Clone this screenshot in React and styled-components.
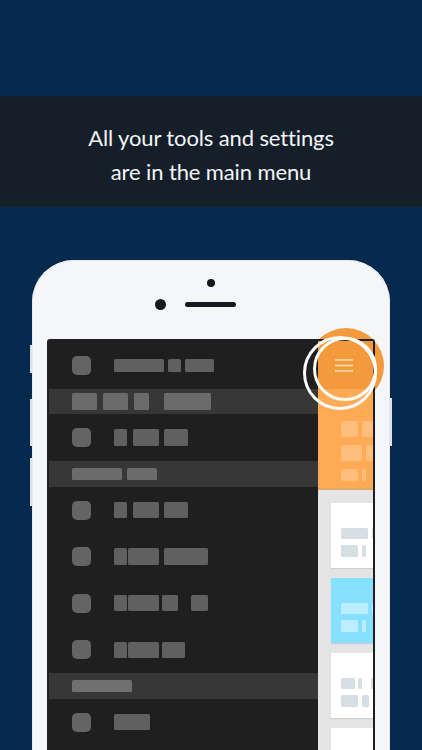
import React from "react";
import styled, { createGlobalStyle } from "styled-components";

const Global = createGlobalStyle`
  html, body { margin: 0; padding: 0; height: 750px; overflow: hidden; background: #052a4e; }
  #root { height: 750px; overflow: hidden; }
`;

const Page = styled.div`
  height: 750px;
  overflow: hidden;
  background: #052a4e;
  display: flex;
  flex-direction: column;
  padding-top: 96px;
  box-sizing: border-box;
`;

const Banner = styled.header`
  height: 111px;
  flex-shrink: 0;
  box-sizing: border-box;
  padding-top: 6px;
  background: #151f2a;
  display: flex;
  flex-direction: column;
  align-items: center;
  justify-content: center;
  color: #f4f5f6;
  font-family: Lato, "Open Sans", sans-serif;
  font-size: 22px;
  line-height: 34px;
  letter-spacing: -0.12px;
`;

const Phone = styled.div`
  position: relative;
  flex-shrink: 0;
  width: 358px;
  height: 600px;
  margin: 53px 0 0 32px;
  background: #f5f6f8;
  border-radius: 42px 42px 0 0;
  box-shadow: inset 0 0 0 1px #e6e8ec;
  display: flex;
  flex-direction: column;
`;

const SideButton = styled.span`
  position: absolute;
  width: 2px;
  top: ${(p) => p.$top}px;
  height: ${(p) => p.$h}px;
  ${(p) => (p.$right ? "right: -2px;" : "left: -2px;")}
  background: #dfe2e7;
`;

const Head = styled.div`
  height: 79px;
  flex-shrink: 0;
  box-sizing: border-box;
  padding-top: 19px;
  display: flex;
  flex-direction: column;
  align-items: center;
`;

const TopDot = styled.span`
  width: 8px;
  height: 8px;
  border-radius: 50%;
  background: #14181f;
`;

const EarRow = styled.div`
  display: flex;
  align-items: center;
  gap: 19.5px;
  margin: 12px 31px 0 0;
`;

const Camera = styled.span`
  width: 11px;
  height: 11px;
  border-radius: 50%;
  background: #14181f;
`;

const Speaker = styled.span`
  width: 51px;
  height: 5px;
  border-radius: 3px;
  background: #14181f;
`;

const Disc = styled.span`
  position: absolute;
  left: 276px;
  top: 68px;
  width: 76px;
  height: 76px;
  border-radius: 50%;
  background: #f39a3c;
`;

const Ring = styled.span`
  position: absolute;
  z-index: 2;
  box-sizing: border-box;
  left: ${(p) => p.$x}px;
  top: ${(p) => p.$y}px;
  width: ${(p) => p.$d}px;
  height: ${(p) => p.$d}px;
  border: 3px solid #fbfbf9;
  border-radius: 50%;
  pointer-events: none;
`;

const Screen = styled.div`
  position: relative;
  z-index: 1;
  flex: 1;
  min-height: 0;
  width: 328px;
  box-sizing: border-box;
  margin-left: 15px;
  display: flex;
  background: #1f1f1f;
  border: 2px solid #1f1f23;
  border-bottom: 0;
  border-radius: 3px 3px 0 0;
  overflow: hidden;
`;

const Drawer = styled.nav`
  width: 269px;
  flex-shrink: 0;
  display: flex;
  flex-direction: column;
  background: #1f1f1f;
`;

const MenuRow = styled.div`
  flex-shrink: 0;
  height: ${(p) => p.$h}px;
  box-sizing: border-box;
  padding: ${(p) => (p.$first ? "1px" : "0")} 0 0 23px;
  display: flex;
  align-items: center;
`;

const SectionRow = styled.div`
  flex-shrink: 0;
  height: ${(p) => p.$h}px;
  padding-left: 23px;
  display: flex;
  align-items: center;
  background: #373737;
`;

const RowIcon = styled.span`
  width: 19px;
  height: 19px;
  flex-shrink: 0;
  margin-right: 23px;
  border-radius: 5px;
  background: #646464;
  filter: blur(0.7px);
`;

const Block = styled.span`
  flex-shrink: 0;
  width: ${(p) => p.$w}px;
  height: ${(p) => p.$h}px;
  margin-left: ${(p) => p.$ml}px;
  background: ${(p) => p.$c};
  border-radius: 1.5px;
  filter: blur(0.7px);
`;

const Strip = styled.aside`
  width: 55px;
  flex-shrink: 0;
  display: flex;
  flex-direction: column;
  background: #e4e4e4;
  overflow: hidden;
`;

const StripHeader = styled.div`
  height: 48px;
  flex-shrink: 0;
  display: flex;
  align-items: center;
  justify-content: center;
  padding: 2px 3px 0 0;
  box-sizing: border-box;
  background: #f39a3c;
  border-bottom: 1px solid #ec9a48;
`;

const StripHero = styled.div`
  height: 101px;
  flex-shrink: 0;
  box-sizing: border-box;
  padding: 32px 0 0 23px;
  background: #ffaa55;
  border-bottom: 2px solid #dfa767;
  display: flex;
  flex-direction: column;
  gap: 8px;
`;

const BlockLine = styled.div`
  display: flex;
`;

const Card = styled.div`
  flex-shrink: 0;
  width: 70px;
  height: 64.5px;
  box-sizing: border-box;
  margin: ${(p) => (p.$first ? "13px" : "10.5px")} 0 0 13px;
  padding: 25px 0 0 10px;
  background: ${(p) => (p.$blue ? "#86e0ff" : "#ffffff")};
  box-shadow: 0 1px 1px #cfcfcf;
  display: flex;
  flex-direction: column;
  gap: 6px;
`;

const TXT = "#606060";
const SEC = "#6b6b6b";
const HERO = "#ffbe7e";
const GREY = "#d6dfe4";
const PALE = "#bceeff";

const seq = (start, spans) => {
  let x = start;
  return spans.map(([a, b]) => {
    const item = { w: b - a, ml: a - x };
    x = b;
    return item;
  });
};

const drawer = [
  { kind: "row", h: 48, first: true, bh: 13, spans: [[114, 164], [168, 181], [185, 214]] },
  { kind: "sec", h: 25, bh: 17, spans: [[72, 97], [103, 128], [134, 149], [164, 211]] },
  { kind: "row", h: 47, bh: 17, spans: [[114, 127], [133, 159], [164, 188]] },
  { kind: "sec", h: 26, bh: 12, spans: [[72, 122], [127, 157]] },
  { kind: "row", h: 46.5, bh: 16, spans: [[114, 127], [133, 159], [164, 188]] },
  { kind: "row", h: 46.5, bh: 17, spans: [[114, 127], [128, 159], [164, 208]] },
  { kind: "row", h: 46.5, bh: 16, spans: [[114, 127], [128, 159], [162, 178], [191, 208]] },
  { kind: "row", h: 46.5, bh: 16, spans: [[114, 127], [128, 159], [162, 185]] },
  { kind: "sec", h: 26, bh: 12, color: "#707070", spans: [[72, 132]] },
  { kind: "row", h: 46.5, bh: 16, spans: [[114, 150]] },
  { kind: "row", h: 46.5, bh: 16, spans: [] },
];

const Blocks = ({ start, spans, h, color }) =>
  seq(start, spans).map((b, i) => <Block key={i} $w={b.w} $ml={b.ml} $h={h} $c={color} />);

const hero = [
  { h: 16, spans: [[341, 358], [362, 380]] },
  { h: 16, spans: [[341, 362], [366, 380]] },
  { h: 12, spans: [[341, 358], [362, 366]] },
];

const cards = [
  { first: true, lines: [[[341, 368], [372, 380]], [[341, 358], [362, 366]]], hs: [11, 12] },
  { blue: true, lines: [[[341, 368], [372, 380]], [[341, 358], [362, 366]]], hs: [11, 12] },
  { lines: [[[341, 355], [358, 362], [371, 380]], [[341, 358], [362, 369]]], hs: [11, 12] },
  { lines: [[[341, 355], [358, 362]], [[341, 358], [362, 369]]], hs: [11, 12] },
];

const Hamburger = () => (
  <svg width="18" height="13" viewBox="0 0 18 13" fill="none" stroke="#ffdfb5" strokeWidth="1.5">
    <path d="M0 1h18M0 6.5h18M0 12h18" />
  </svg>
);

export default function App() {
  return (
    <Page>
      <Global />
      <Banner>
        <div>All your tools and settings</div>
        <div>are in the main menu</div>
      </Banner>
      <Phone>
        <SideButton $top={85} $h={28} />
        <SideButton $top={139} $h={47} />
        <SideButton $top={198} $h={48} />
        <SideButton $right $top={138} $h={48} />
        <Disc />
        <Head>
          <TopDot />
          <EarRow>
            <Camera />
            <Speaker />
          </EarRow>
        </Head>
        <Screen>
          <Drawer>
            {drawer.map((r, i) =>
              r.kind === "sec" ? (
                <SectionRow key={i} $h={r.h}>
                  <Blocks start={72} spans={r.spans} h={r.bh} color={r.color || SEC} />
                </SectionRow>
              ) : (
                <MenuRow key={i} $h={r.h} $first={r.first}>
                  <RowIcon />
                  <Blocks start={114} spans={r.spans} h={r.bh} color={TXT} />
                </MenuRow>
              )
            )}
          </Drawer>
          <Strip>
            <StripHeader>
              <Hamburger />
            </StripHeader>
            <StripHero>
              {hero.map((l, i) => (
                <BlockLine key={i}>
                  <Blocks start={341} spans={l.spans} h={l.h} color={HERO} />
                </BlockLine>
              ))}
            </StripHero>
            {cards.map((c, i) => (
              <Card key={i} $first={c.first} $blue={c.blue}>
                {c.lines.map((l, j) => (
                  <BlockLine key={j}>
                    <Blocks start={341} spans={l} h={c.hs[j]} color={c.blue ? PALE : GREY} />
                  </BlockLine>
                ))}
              </Card>
            ))}
          </Strip>
        </Screen>
        <Ring $x={270.5} $y={76} $d={74} />
        <Ring $x={280.5} $y={76.5} $d={64} />
      </Phone>
    </Page>
  );
}
